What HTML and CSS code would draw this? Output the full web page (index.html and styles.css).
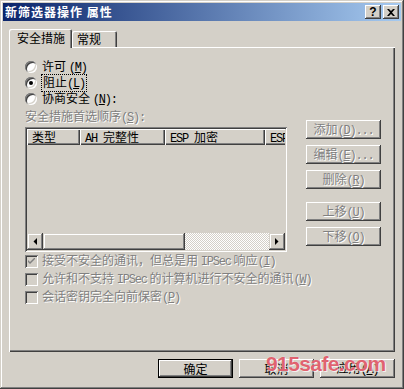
FILE: index.html
```html
<!DOCTYPE html>
<html lang="zh-CN">
<head>
<meta charset="utf-8">
<title>新筛选器操作 属性</title>
<link rel="stylesheet" href="styles.css">
</head>
<body>
<div class="window">
  <div class="titlebar">
    <span class="title">新筛选器操作 属性</span>
    <div class="tb-buttons">
      <span class="tb-btn help">?</span>
      <span class="tb-btn close"><svg width="8" height="7" viewBox="0 0 8 7"><path d="M0 0h2l2 2 2-2h2L5 3.5 8 7H6L4 5 2 7H0l3-3.5z" fill="#000"/></svg></span>
    </div>
  </div>
  <div class="client">
    <div class="tabs">
      <div class="tab active">安全措施</div>
      <div class="tab">常规</div>
    </div>
    <div class="panel">
      <div class="main">
        <div class="left">
          <div class="radio"><span class="rb"></span><span class="lbl">许可 <span class="lat">(<u>M</u>)</span></span></div>
          <div class="radio"><span class="rb checked"></span><span class="lbl focus">阻止<span class="lat">(<u>L</u>)</span></span></div>
          <div class="radio"><span class="rb"></span><span class="lbl">协商安全 <span class="lat">(<u>N</u>):</span></span></div>
          <div class="caption disabled">安全措施首选顺序<span class="lat">(<u>S</u>):</span></div>
          <div class="listview">
            <div class="lv-header">
              <span class="col c1">类型</span>
              <span class="col c2"><span class="lat">AH </span>完整性</span>
              <span class="col c3"><span class="lat">ESP </span>加密</span>
              <span class="col c4"><span class="lat">ESP</span></span>
            </div>
            <div class="lv-body"></div>
            <div class="hscroll">
              <span class="sb-btn"><svg width="4" height="7" viewBox="0 0 4 7"><path d="M4 0v7L0.5 3.5z" fill="#000"/></svg></span>
              <span class="sb-thumb"></span>
              <span class="sb-track"></span>
              <span class="sb-btn"><svg width="4" height="7" viewBox="0 0 4 7"><path d="M0 0v7l3.5-3.5z" fill="#000"/></svg></span>
            </div>
          </div>
        </div>
        <div class="side">
          <button class="btn disabled">添加<span class="lat">(<u>D</u>)...</span></button>
          <button class="btn disabled">编辑<span class="lat">(<u>E</u>)...</span></button>
          <button class="btn disabled">删除<span class="lat">(<u>R</u>)</span></button>
          <button class="btn disabled gap">上移<span class="lat">(<u>U</u>)</span></button>
          <button class="btn disabled">下移<span class="lat">(<u>O</u>)</span></button>
        </div>
      </div>
      <div class="checks">
        <div class="check"><span class="cb"><svg width="7" height="7" viewBox="0 0 7 7"><path d="M0 2l2 2 5-5v2L2 6 0 4z" fill="#808080"/></svg></span><span class="disabled">接受不安全的通讯，但总是用 <span class="lat">IPSec</span> 响应<span class="lat">(<u>I</u>)</span></span></div>
        <div class="check"><span class="cb"></span><span class="disabled">允许和不支持 <span class="lat">IPSec</span> 的计算机进行不安全的通讯<span class="lat">(<u>W</u>)</span></span></div>
        <div class="check"><span class="cb"></span><span class="disabled">会话密钥完全向前保密<span class="lat">(<u>P</u>)</span></span></div>
      </div>
    </div>
    <div class="footer">
      <button class="btn default">确定</button>
      <button class="btn">取消</button>
      <button class="btn">应用<span class="lat">(<u>A</u>)</span></button>
    </div>
  </div>
  <div class="watermark">915safe.com</div>
</div>
</body>
</html>
```
FILE: styles.css
```css
* { box-sizing: border-box; }
html, body { margin: 0; padding: 0; }
body {
  width: 404px;
  height: 389px;
  overflow: hidden;
  background: #d4d0c8;
  font-family: "Noto Sans CJK SC", "Liberation Sans", sans-serif;
  font-size: 12px;
  color: #000;
}
.lat {
  font-family: "Liberation Mono", "Noto Sans CJK SC", monospace;
  letter-spacing: -1.2px;
}
.window {
  position: relative;
  width: 404px;
  height: 389px;
  padding: 3px;
  background: #d4d0c8;
  box-shadow: inset -1px -1px #404040, inset 1px 1px #d4d0c8, inset -2px -2px #808080, inset 2px 2px #fff;
  display: flex;
  flex-direction: column;
}
.titlebar {
  height: 18px;
  flex: none;
  background: linear-gradient(to right, #0a246a, #a6caf0);
  display: flex;
  align-items: center;
  justify-content: space-between;
  padding: 0 2px;
}
.title {
  color: #fff;
  font-weight: bold;
  font-size: 12px;
  line-height: 18px;
  letter-spacing: 1px;
}
.tb-buttons { display: flex; gap: 2px; }
.tb-btn {
  width: 16px;
  height: 14px;
  background: #d4d0c8;
  box-shadow: inset -1px -1px #404040, inset 1px 1px #fff, inset -2px -2px #808080;
  display: flex;
  align-items: center;
  justify-content: center;
}
.help {
  font-family: "Liberation Sans", sans-serif;
  font-weight: bold;
  font-size: 12px;
  line-height: 14px;
}
.client {
  padding: 0 6px;
  display: flex;
  flex-direction: column;
}
.tabs {
  height: 27px;
  margin-bottom: -1px;
  display: flex;
  align-items: flex-end;
  position: relative;
  z-index: 1;
}
.tab {
  height: 16px;
  line-height: 16px;
  margin-bottom: 1px;
  padding: 0 16px 0 5px;
  background: #d4d0c8;
  border-radius: 2px 2px 0 0;
  box-shadow: inset 1px 1px #fff, inset -1px 0 #404040, inset -2px 0 #808080;
}
.tab.active {
  height: 19px;
  margin-bottom: 0;
  padding: 1px 7px 0 8px;
}
.panel {
  height: 305px;
  padding: 12px 14px 0 16px;
  box-shadow: inset 1px 1px #fff, inset -1px -1px #404040, inset -2px -2px #808080;
}
.main {
  display: flex;
  gap: 19px;
  align-items: flex-start;
}
.left {
  width: 262px;
  display: flex;
  flex-direction: column;
}
.radio {
  height: 16px;
  display: flex;
  align-items: center;
  line-height: 14px;
}
.rb {
  width: 12px;
  height: 12px;
  border-radius: 50%;
  background: #fff;
  margin-right: 5px;
  flex: none;
  box-shadow: inset 1px 1px #808080, inset -1px -1px #fff, inset 2px 2px #404040, inset -2px -2px #d4d0c8;
  display: flex;
  align-items: center;
  justify-content: center;
}
.rb.checked::after {
  content: "";
  width: 4px;
  height: 4px;
  border-radius: 50%;
  background: #000;
}
.focus {
  outline: 1px dotted #000;
  outline-offset: 0;
  padding: 0 1px;
}
.disabled {
  color: #808080;
  text-shadow: 1px 1px 0 #fff;
}
.caption {
  height: 16px;
  line-height: 16px;
  margin-top: 1px;
}
.listview {
  margin-top: 3px;
  height: 125px;
  padding: 2px;
  background: #d4d0c8;
  box-shadow: inset 1px 1px #808080, inset -1px -1px #fff, inset 2px 2px #404040, inset -2px -2px #d4d0c8;
  display: flex;
  flex-direction: column;
  overflow: hidden;
}
.lv-header {
  height: 16px;
  display: flex;
  flex: none;
  overflow: hidden;
}
.col {
  flex: none;
  height: 16px;
  line-height: 16px;
  padding-left: 5px;
  white-space: nowrap;
  overflow: hidden;
  box-shadow: inset 1px 1px #fff, inset -1px -1px #404040, inset -2px -2px #808080;
}
.c1 { width: 53px; }
.c2 { width: 85px; }
.c3 { width: 100px; }
.c4 { width: 40px; }
.lv-body { flex: 1; }
.hscroll {
  height: 17px;
  display: flex;
  flex: none;
}
.sb-btn, .sb-thumb {
  background: #d4d0c8;
  box-shadow: inset -1px -1px #404040, inset 1px 1px #d4d0c8, inset -2px -2px #808080, inset 2px 2px #fff;
}
.sb-btn {
  width: 16px;
  display: flex;
  align-items: center;
  justify-content: center;
}
.sb-thumb { width: 142px; }
.sb-track {
  flex: 1;
  background: repeating-conic-gradient(#fff 0 25%, #d4d0c8 0 50%) 0 0 / 2px 2px;
}
.side {
  width: 75px;
  margin-top: 61px;
  display: flex;
  flex-direction: column;
  gap: 6px;
}
.btn {
  height: 19px;
  width: 75px;
  padding: 0;
  border: 0;
  font: inherit;
  line-height: 17px;
  color: #000;
  background: #d4d0c8;
  box-shadow: inset -1px -1px #404040, inset 1px 1px #fff, inset -2px -2px #808080;
  text-align: center;
  white-space: nowrap;
}
.btn.disabled {
  color: #808080;
  text-shadow: 1px 1px 0 #fff;
}
.btn.gap { margin-top: 7px; }
.btn.default {
  box-shadow: inset 0 0 0 1px #000, inset -2px -2px #404040, inset 2px 2px #fff, inset -3px -3px #808080;
}
.checks {
  display: flex;
  flex-direction: column;
}
.check {
  height: 18px;
  display: flex;
  align-items: center;
  line-height: 14px;
}
.cb {
  width: 13px;
  height: 13px;
  flex: none;
  margin-right: 4px;
  background: #d4d0c8;
  box-shadow: inset 1px 1px #808080, inset -1px -1px #fff, inset 2px 2px #404040, inset -2px -2px #d4d0c8;
  display: flex;
  align-items: center;
  justify-content: center;
}
.footer {
  margin-top: 7px;
  display: flex;
  justify-content: flex-end;
  gap: 6px;
}
.watermark {
  position: absolute;
  left: 266px;
  top: 352px;
  font-family: "Liberation Sans", sans-serif;
  font-weight: bold;
  font-size: 21px;
  letter-spacing: -0.6px;
  color: rgba(214, 48, 66, 0.75);
  text-shadow: 0 0 1px #fff, 1px 1px 0 rgba(255,255,255,0.7);
  pointer-events: none;
}
```
